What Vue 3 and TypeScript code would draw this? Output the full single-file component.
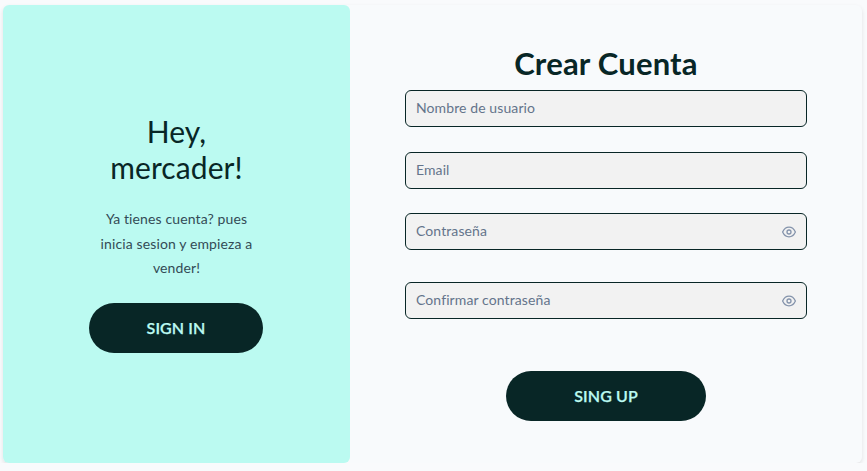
<script setup lang="ts">
interface Field {
  name: string
  placeholder: string
  secret: boolean
}

const fields: Field[] = [
  { name: 'username', placeholder: 'Nombre de usuario', secret: false },
  { name: 'email', placeholder: 'Email', secret: false },
  { name: 'password', placeholder: 'Contraseña', secret: true },
  { name: 'confirm', placeholder: 'Confirmar contraseña', secret: true },
]
</script>

<template>
  <main class="card">
    <section class="welcome">
      <h2 class="greeting">Hey,<br />mercader!</h2>
      <p class="hint">Ya tienes cuenta? pues<br />inicia sesion y empieza a<br />vender!</p>
      <button class="button sign-in" type="button">SIGN IN</button>
    </section>
    <form class="register" @submit.prevent>
      <h1 class="title">Crear Cuenta</h1>
      <div v-for="field in fields" :key="field.name" class="field" :class="field.name">
        <input
          class="input"
          :name="field.name"
          :type="field.secret ? 'password' : 'text'"
          :placeholder="field.placeholder"
        />
        <svg v-if="field.secret" class="eye" viewBox="0 0 14 14" fill="none" stroke="currentColor">
          <path d="M.6 7C2 4 4.100 2.200 7 2.200S12 4 13.400 7C12 10 9.900 11.800 7 11.800S2 10 .6 7Z" />
          <circle cx="7" cy="7" r="2" />
        </svg>
      </div>
      <button class="button sign-up" type="submit">SING UP</button>
    </form>
  </main>
</template>

<style>
body {
  background: #f9fafc;
}
</style>

<style scoped>
.card {
  box-sizing: border-box;
  display: flex;
  width: 859px;
  height: 458px;
  margin: 5px 0 0 3px;
  border-radius: 6px;
  background: #f8fafc;
  box-shadow: 0 2px 4px rgba(0, 0, 0, 0.1);
  font-family: Lato, 'Open Sans', sans-serif;
  color: #082626;
}
.welcome {
  box-sizing: border-box;
  display: flex;
  flex-direction: column;
  align-items: center;
  width: 347px;
  padding-top: 108px;
  border-radius: 6px;
  background: #bbfaf1;
}
.greeting {
  margin: 0;
  font-size: 30px;
  font-weight: 400;
  line-height: 36px;
  letter-spacing: 0.1px;
  text-align: center;
}
.hint {
  margin: 22px 0 0;
  font-size: 14px;
  line-height: 24.5px;
  letter-spacing: 0.12px;
  text-align: center;
  color: #334b56;
}
.button {
  height: 50px;
  padding: 0 0 2px;
  border: 0;
  border-radius: 25px;
  background: #082626;
  color: #bbfaf1;
  font-family: inherit;
  font-size: 16px;
  font-weight: 600;
  letter-spacing: 0.1px;
  -webkit-text-stroke: 0.25px currentColor;
}
.sign-in {
  width: 174px;
  margin: 22.5px 1px 0 0;
}
.register {
  box-sizing: border-box;
  display: flex;
  flex-direction: column;
  align-items: center;
  width: 512px;
  padding: 40px 55px 0;
}
.title {
  margin: 0;
  font-size: 31px;
  font-weight: 700;
  line-height: 36px;
  height: 45px;
  letter-spacing: 0.2px;
}
.field {
  box-sizing: border-box;
  display: flex;
  align-items: center;
  width: 402px;
  height: 37px;
  padding: 0 10px;
  border: 1px solid #082626;
  border-radius: 6px;
  background: #f2f2f2;
}
.email {
  margin-top: 25px;
}
.password {
  margin-top: 24px;
}
.confirm {
  margin-top: 32px;
}
.input {
  flex: 1;
  min-width: 0;
  padding: 0 0 2px;
  border: 0;
  outline: 0;
  background: transparent;
  color: #082626;
  font-family: inherit;
  font-size: 14px;
  letter-spacing: 0.1px;
}
.input::placeholder {
  color: #64748b;
  opacity: 1;
}
.eye {
  width: 14px;
  height: 14px;
  color: #8493ab;
  stroke-width: 1.3;
}
.sign-up {
  width: 200px;
  margin-top: 52px;
}
</style>
